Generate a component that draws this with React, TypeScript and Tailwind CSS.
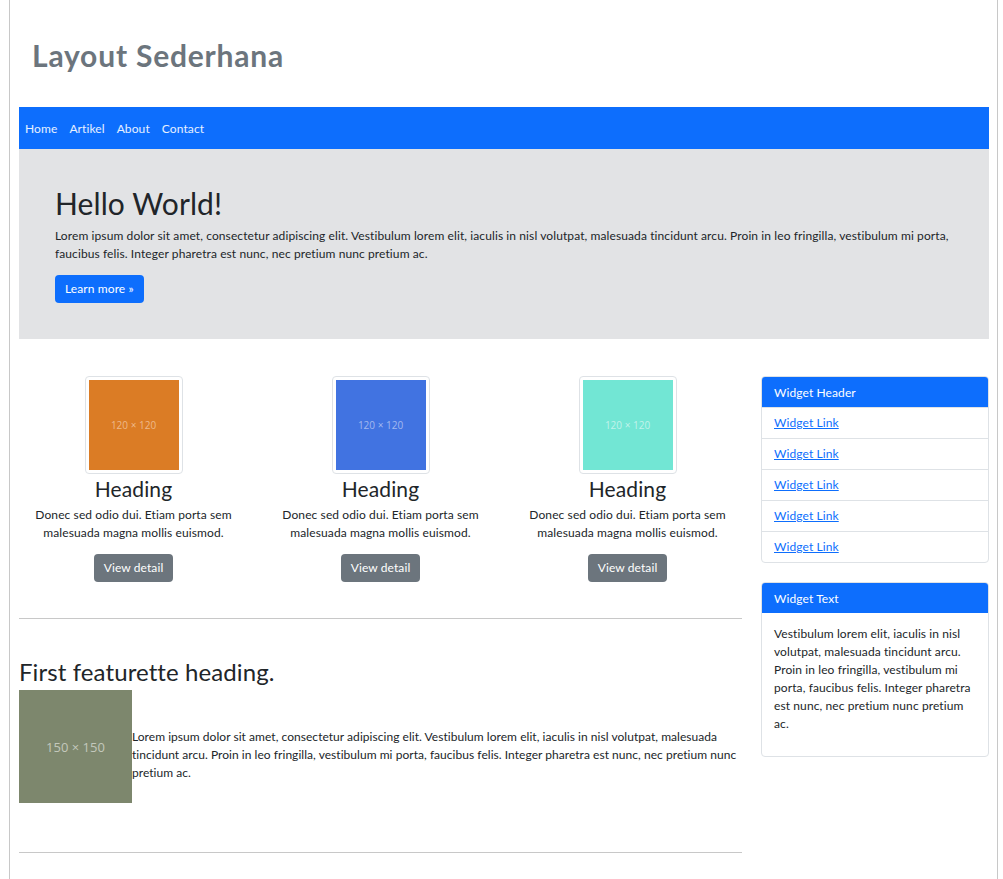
import React from "react";

const lorem =
  "Lorem ipsum dolor sit amet, consectetur adipiscing elit. Vestibulum lorem elit, iaculis in nisl volutpat, malesuada tincidunt arcu. Proin in leo fringilla, vestibulum mi porta, faucibus felis. Integer pharetra est nunc, nec pretium nunc pretium ac.";

const cards = [
  { color: "bg-[#db7c25]", text: "text-[#eeb98a]" },
  { color: "bg-[#4173e1]", text: "text-[#a3b9ef]" },
  { color: "bg-[#72e6d4]", text: "text-[#c1f3eb]" },
];

function Placeholder({ size, className, textClass, label }: { size: string; className: string; textClass: string; label: string }) {
  return (
    <div className={`${size} ${className} flex items-center justify-center`}>
      <span className={textClass}>{label}</span>
    </div>
  );
}

export default function App() {
  return (
    <div className="min-h-screen bg-white font-['Lato','Noto_Sans',sans-serif] text-[12px] leading-[18px] tracking-[0.1px] text-[#212529]">
      <div className="ml-[9px] min-h-[879px] w-[989px] border-x border-[#c8c8c8] pl-[9px] pr-[8px]">
        {/* header */}
        <header className="flex h-[107px] items-center pl-[13px] pt-[2px]">
          <h1 className="text-[30px] font-bold leading-[36px] tracking-[0.8px] text-[#6c757d]">Layout Sederhana</h1>
        </header>

        {/* navbar */}
        <nav className="flex h-[42px] items-center bg-[#0d6efd] pt-[1px]">
          {["Home", "Artikel", "About", "Contact"].map((item) => (
            <a key={item} href="#" className="px-[6px] text-[12px] text-white/90">
              {item}
            </a>
          ))}
        </nav>

        {/* jumbotron */}
        <section className="bg-[#e2e3e5] p-[36px]">
          <h2 className="mb-[6px] text-[30px] leading-[36px] font-normal">Hello World!</h2>
          <p className="mb-[12px]">{lorem}</p>
          <a href="#" className="inline-flex h-[28px] items-center rounded-[4px] bg-[#0d6efd] px-[10px] text-white">
            Learn more »
          </a>
        </section>

        <div className="mt-[37px] grid grid-cols-[723px_228px] gap-[19px]">
          <main>
            <div className="-mx-[9px] grid grid-cols-3">
              {cards.map((c, i) => (
                <div key={i} className="flex flex-col items-center px-[9px] text-center">
                  <div className="rounded-[4px] border border-[#dee2e6] bg-white p-[3px]">
                    <Placeholder size="h-[90px] w-[90px]" className={c.color} textClass={`${c.text} text-[10px] tracking-normal font-['Open_Sans',sans-serif]`} label="120 × 120" />
                  </div>
                  <h3 className="mt-[2px] mb-[5px] text-[21px] leading-[25px]">Heading</h3>
                  <p className="mb-[12px] px-[12px]">Donec sed odio dui. Etiam porta sem malesuada magna mollis euismod.</p>
                  <a href="#" className="inline-flex h-[28px] items-center rounded-[4px] bg-[#6c757d] px-[10px] text-white">
                    View detail
                  </a>
                </div>
              ))}
            </div>

            <hr className="mt-[36px] border-[#c8c8c8]" />

            <h2 className="mt-[38px] mb-[4px] text-[24px] leading-[29px]">First featurette heading.</h2>
            <div className="flex items-start">
              <Placeholder size="h-[113px] w-[113px] shrink-0" className="bg-[#7d876d]" textClass="text-[13px] tracking-normal text-[#c3c8bc] font-['Open_Sans',sans-serif]" label="150 × 150" />
              <p className="mt-[38px] tracking-[0.04px]">{lorem}</p>
            </div>

            <hr className="mt-[49px] border-[#c8c8c8]" />
          </main>

          <aside className="flex flex-col gap-[19px]">
            <div className="overflow-hidden rounded-[4px] border border-[#dee2e6]">
              <div className="h-[30px] bg-[#0d6efd] px-[12px] pt-[1px] leading-[30px] text-white">Widget Header</div>
              {[1, 2, 3, 4, 5].map((n) => (
                <div key={n} className="h-[31px] border-t border-[#dee2e6] px-[12px] leading-[30px]">
                  <a href="#" className="text-[#0d6efd] underline">
                    Widget Link
                  </a>
                </div>
              ))}
            </div>

            <div className="overflow-hidden rounded-[4px] border border-[#dee2e6]">
              <div className="h-[30px] bg-[#0d6efd] px-[12px] pt-[1px] leading-[30px] text-white">Widget Text</div>
              <div className="px-[12px] pt-[12px] pb-[11px]">
                <p className="mb-[12px]">
                  Vestibulum lorem elit, iaculis in nisl volutpat, malesuada tincidunt arcu. Proin in leo fringilla, vestibulum mi porta, faucibus felis. Integer pharetra est nunc, nec pretium nunc pretium ac.
                </p>
              </div>
            </div>
          </aside>
        </div>
      </div>
    </div>
  );
}
